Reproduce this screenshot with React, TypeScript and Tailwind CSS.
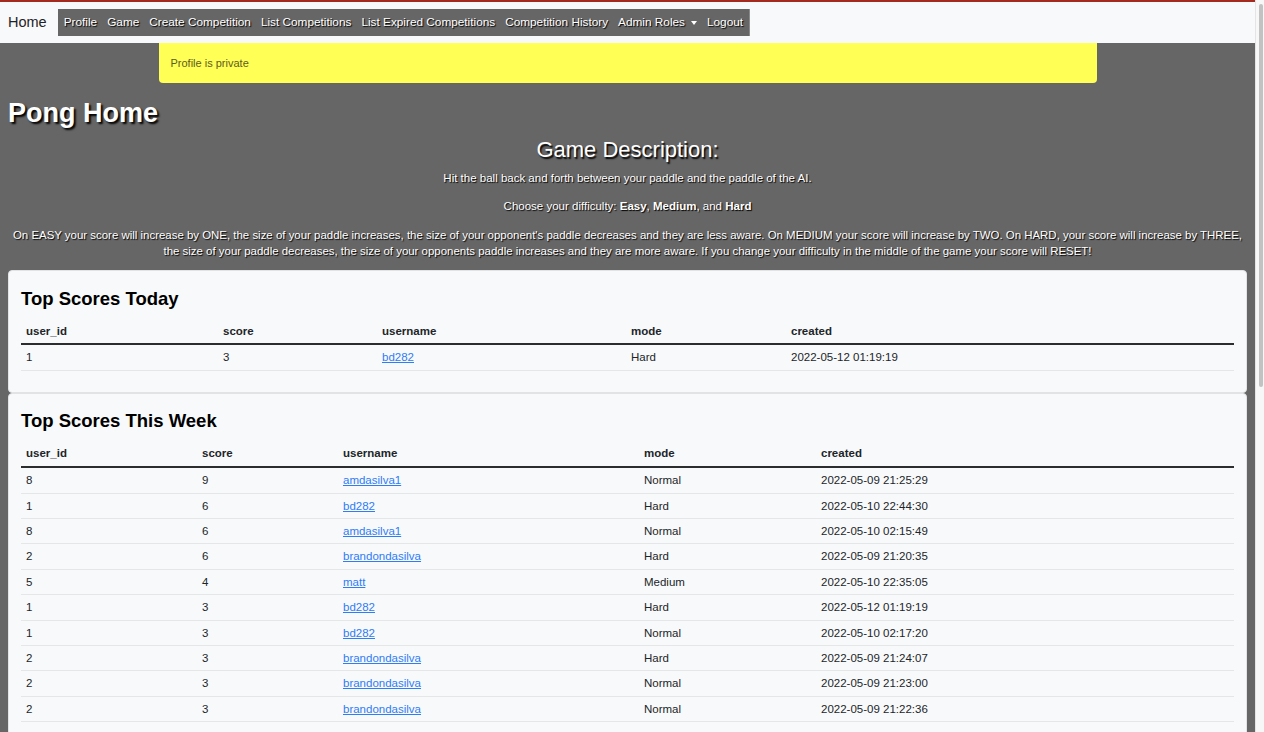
import React from 'react';

type Row = [string, string, string, string, string];

const today: Row[] = [['1', '3', 'bd282', 'Hard', '2022-05-12 01:19:19']];

const week: Row[] = [
  ['8', '9', 'amdasilva1', 'Normal', '2022-05-09 21:25:29'],
  ['1', '6', 'bd282', 'Hard', '2022-05-10 22:44:30'],
  ['8', '6', 'amdasilva1', 'Normal', '2022-05-10 02:15:49'],
  ['2', '6', 'brandondasilva', 'Hard', '2022-05-09 21:20:35'],
  ['5', '4', 'matt', 'Medium', '2022-05-10 22:35:05'],
  ['1', '3', 'bd282', 'Hard', '2022-05-12 01:19:19'],
  ['1', '3', 'bd282', 'Normal', '2022-05-10 02:17:20'],
  ['2', '3', 'brandondasilva', 'Hard', '2022-05-09 21:24:07'],
  ['2', '3', 'brandondasilva', 'Normal', '2022-05-09 21:23:00'],
  ['2', '3', 'brandondasilva', 'Normal', '2022-05-09 21:22:36'],
];

const links = [
  'Profile',
  'Game',
  'Create Competition',
  'List Competitions',
  'List Expired Competitions',
  'Competition History',
];

function ScoreCard({
  title,
  rows,
  widths,
  pad,
  headGap,
}: {
  title: string;
  rows: Row[];
  widths: string[];
  pad: string;
  headGap: string;
}) {
  const heads = ['user_id', 'score', 'username', 'mode', 'created'];
  return (
    <div className={`bg-[#f8f9fa] border border-[#e2e3e5] rounded-[4px] px-[12px] ${pad}`}>
      <h2 className={`text-[18.5px] leading-[22px] font-bold text-black ${headGap}`}>
        {title}
      </h2>
      <table className="w-full table-fixed border-collapse text-[11.5px] text-[#212529]">
        <thead>
          <tr className="border-b-2 border-[#2b2d2f]">
            {heads.map((h, i) => (
              <th
                key={h}
                className={`${widths[i]} text-left font-bold px-[5px] py-[5.5px] leading-[14.4px]`}
              >
                {h}
              </th>
            ))}
          </tr>
        </thead>
        <tbody>
          {rows.map((r, i) => (
            <tr key={i} className="border-b border-[#e5e6e8]">
              <td className="px-[5px] py-[5px] leading-[14.4px]">{r[0]}</td>
              <td className="px-[5px] py-[5px] leading-[14.4px]">{r[1]}</td>
              <td className="px-[5px] py-[5px] leading-[14.4px]">
                <a href="#" className="text-[#2f7cf6] underline">
                  {r[2]}
                </a>
              </td>
              <td className="px-[5px] py-[5px] leading-[14.4px]">{r[3]}</td>
              <td className="px-[5px] py-[5px] leading-[14.4px]">{r[4]}</td>
            </tr>
          ))}
        </tbody>
      </table>
    </div>
  );
}

export default function App() {
  return (
    <div className="h-screen overflow-hidden flex bg-[#666666] font-['Liberation_Sans',Arial,sans-serif]">
      <div className="flex-1 min-w-0">
        <nav className="h-[43px] bg-[#f8f9fa] border-t-[2px] border-[#a4291f] flex items-center pl-[8px]">
          <span className="text-[14.5px] text-[#1f2226] mr-[11px]">Home</span>
          <div className="h-[27px] bg-[#666666] flex items-center px-[1px] border-r border-[#8a8a8a]">
            {links.map((l) => (
              <a
                key={l}
                href="#"
                className="px-[5px] text-[11.8px] text-white [text-shadow:1px_1px_1px_#000]"
              >
                {l}
              </a>
            ))}
            <a
              href="#"
              className="px-[5px] text-[11.8px] text-white [text-shadow:1px_1px_1px_#000] flex items-center"
            >
              Admin Roles
              <span className="ml-[6px] inline-block w-0 h-0 border-t-[4px] border-t-white border-x-[3.5px] border-x-transparent" />
            </a>
            <a
              href="#"
              className="px-[5px] text-[11.8px] text-white [text-shadow:1px_1px_1px_#000]"
            >
              Logout
            </a>
          </div>
        </nav>

        <div className="px-[8px]">
          <div className="w-[938px] mx-auto h-[40px] bg-[#ffff55] rounded-b-[4px] flex items-center px-[12px] text-[11px] text-[#5e5c20]">
            Profile is private
          </div>

          <h1 className="mt-[14px] text-[27px] leading-[32px] font-bold text-white [text-shadow:2px_2px_2px_#000]">
            Pong Home
          </h1>

          <div className="text-center text-white [text-shadow:1px_1px_1px_#000]">
            <h3 className="mt-[8px] text-[22px] leading-[26px] font-medium [text-shadow:1.5px_1.5px_1.5px_#000]">
              Game Description:
            </h3>
            <p className="mt-[7px] text-[11.5px] leading-[16px]">
              Hit the ball back and forth between your paddle and the paddle of the AI.
            </p>
            <p className="mt-[12px] text-[11.5px] leading-[16px]">
              Choose your difficulty: <b>Easy</b>, <b>Medium</b>, and <b>Hard</b>
            </p>
            <p className="mt-[13px] mb-[11px] text-[11.45px] leading-[16px]">
              On EASY your score will increase by ONE, the size of your paddle increases, the size
              of your opponent's paddle decreases and they are less aware. On MEDIUM your score will
              increase by TWO. On HARD, your score will increase by THREE,
              <br />
              the size of your paddle decreases, the size of your opponents paddle increases and they
              are more aware. If you change your difficulty in the middle of the game your score will
              RESET!
            </p>
          </div>

          <ScoreCard
            title="Top Scores Today"
            rows={today}
            pad="pt-[17px] pb-[21px]"
            headGap="mb-[8px]"
            widths={['w-[197px]', 'w-[159px]', 'w-[249px]', 'w-[160px]', 'w-auto']}
          />
          <ScoreCard
            title="Top Scores This Week"
            rows={week}
            pad="pt-[16px] pb-[20px]"
            headGap="mb-[9px]"
            widths={['w-[176px]', 'w-[141px]', 'w-[301px]', 'w-[177px]', 'w-auto']}
          />
        </div>
      </div>

      <div className="w-[9px] shrink-0 bg-[#f7f7f7] border-l border-[#e4e4e4] pt-[4px] pl-[3px] pr-[1px]">
        <div className="h-[383px] rounded-full bg-[#c2c2c2]" />
      </div>
    </div>
  );
}
